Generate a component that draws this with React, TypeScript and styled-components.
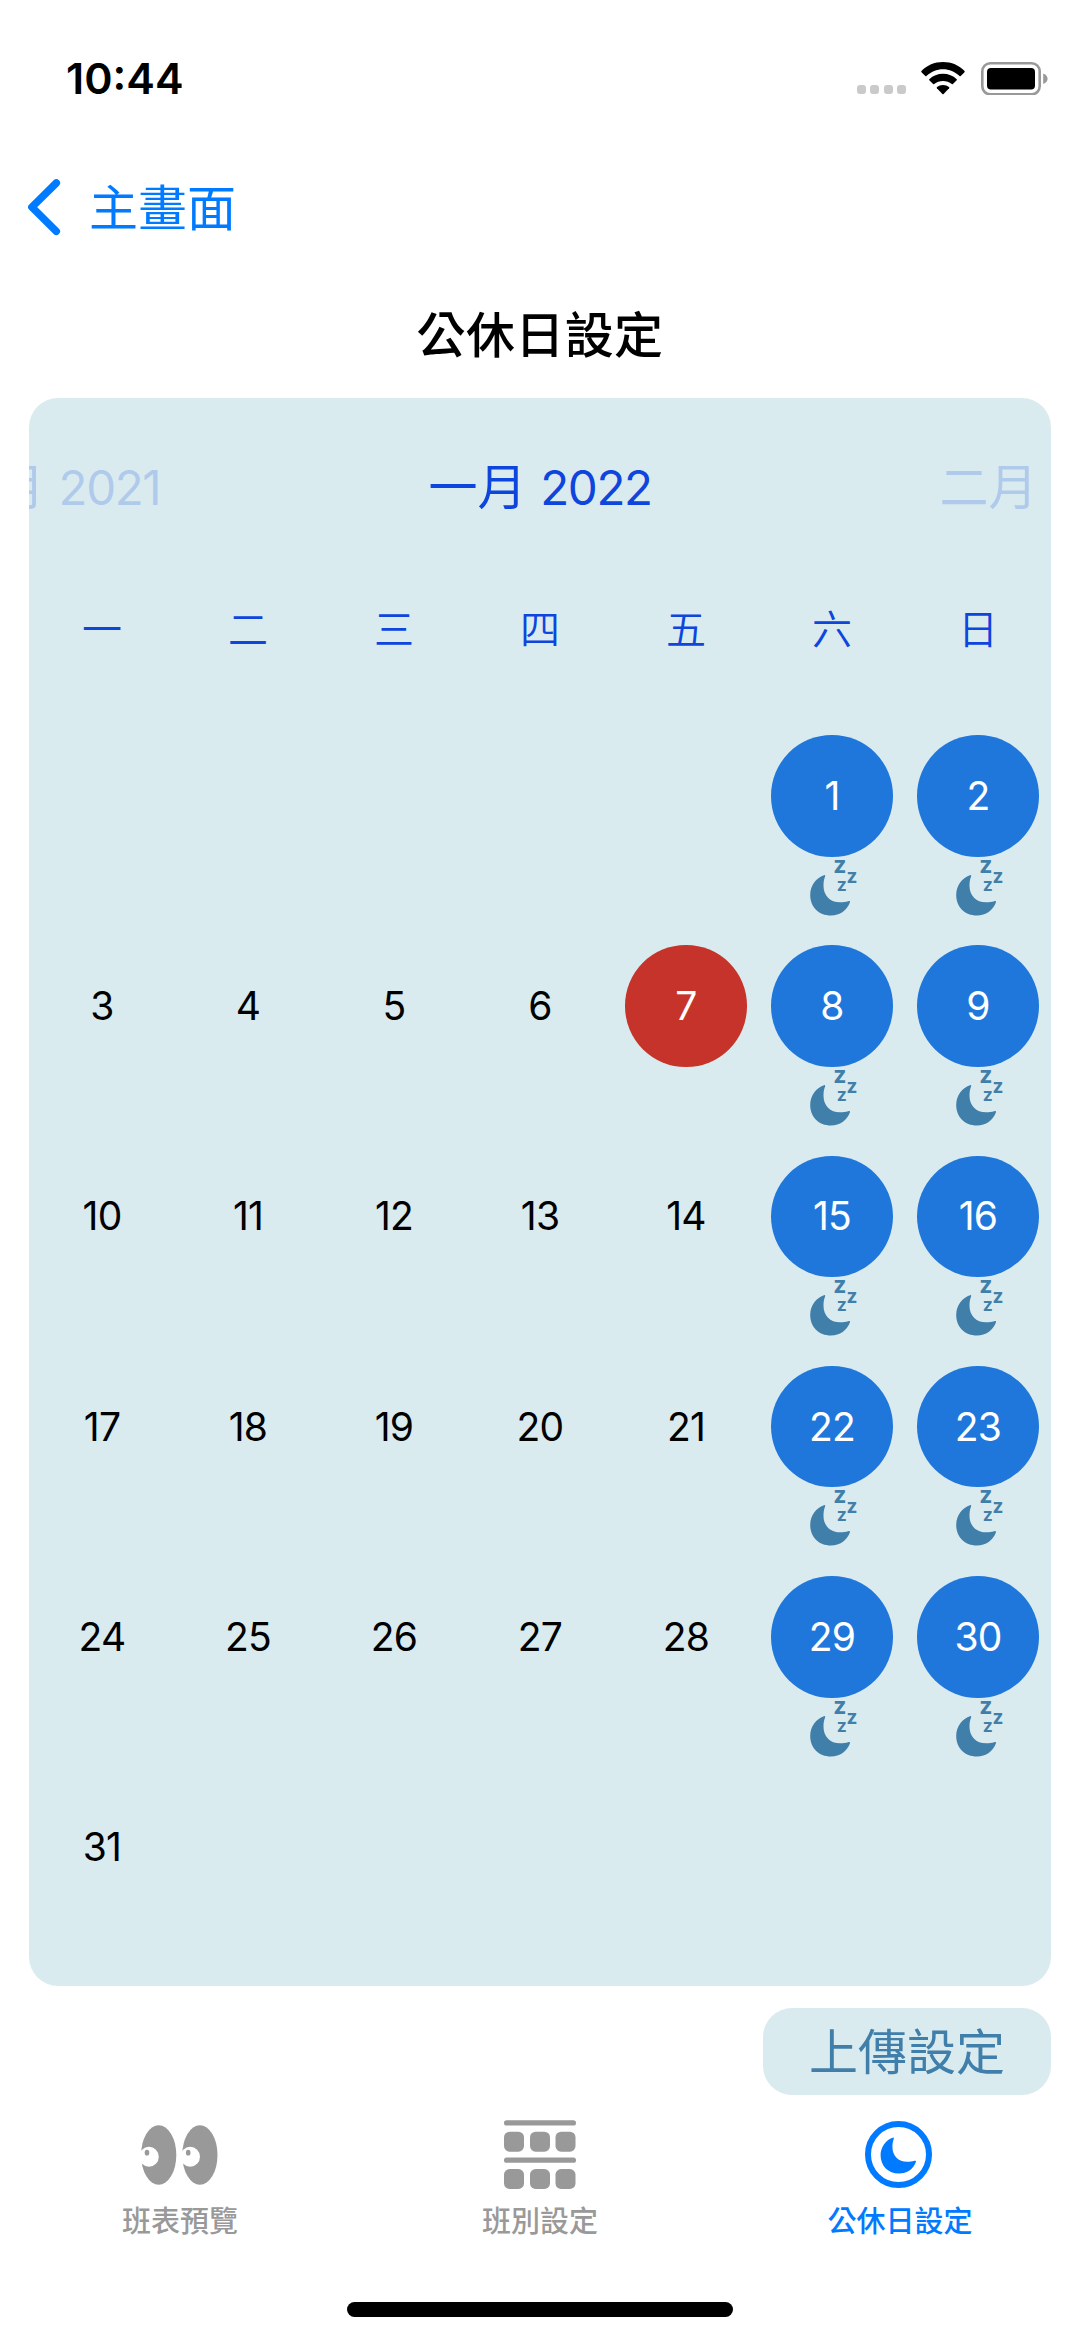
import React from 'react';
import styled, { createGlobalStyle } from 'styled-components';

const BLUE = '#007aff';
const GRAY = '#999999';
const PANEL = '#daebef';
const STEEL = '#417fab';

const GlobalStyle = createGlobalStyle`
  *, *::before, *::after { box-sizing: border-box; }
  body {
    margin: 0;
    background: #fff;
    font-family: Inter, "Noto Sans CJK TC", sans-serif;
    color: #000;
  }
  svg { display: block; }
`;

const Screen = styled.div`
  width: 1080px;
  height: 2340px;
  display: flex;
  flex-direction: column;
  background: #fff;
  overflow: hidden;
`;

const StatusBar = styled.header`
  height: 127px;
  padding: 62px 32px 0 66px;
  display: flex;
  justify-content: space-between;
  align-items: flex-start;
`;

const Clock = styled.div`
  font-size: 43px;
  line-height: 32px;
  font-weight: 600;
`;

const StatusIcons = styled.div`
  display: flex;
  align-items: flex-end;
  height: 33px;
`;

const SignalDots = styled.div`
  display: flex;
  gap: 4.5px;
  margin: 0 15px 1px 0;
`;

const SignalDot = styled.span`
  width: 9px;
  height: 9px;
  border-radius: 3px;
  background: #cacaca;
`;

const NavBar = styled.nav`
  height: 162px;
  padding: 0 28px;
  display: flex;
  align-items: center;
`;

const BackButton = styled.button`
  display: flex;
  align-items: center;
  gap: 28px;
  padding: 0;
  border: 0;
  background: none;
  font: inherit;
  font-size: 49px;
  line-height: 60px;
  color: ${BLUE};
`;

const BackLabel = styled.span`
  padding-top: 2px;
`;

const Title = styled.h1`
  margin: 0;
  height: 108.5px;
  padding-top: 17px;
  text-align: center;
  font-size: 49px;
  line-height: 60px;
  font-weight: 500;
  letter-spacing: 0.4px;
`;

const Calendar = styled.section`
  height: 1588px;
  flex: none;
  margin: 0 29px;
  border-radius: 29px;
  background: ${PANEL};
  overflow: hidden;
  display: flex;
  flex-direction: column;
`;

const MonthHeader = styled.div`
  height: 180px;
  flex: none;
  display: flex;
  justify-content: center;
  align-items: center;
`;

const Month = styled.div<{ $faded?: boolean }>`
  flex: 0 0 511px;
  text-align: center;
  white-space: nowrap;
  font-size: 49px;
  line-height: 60px;
  color: rgb(14, 69, 221);
  opacity: ${(p) => (p.$faded ? 0.2 : 1)};
`;

const Year = styled.span`
  font-size: 47.5px;
  letter-spacing: -1.4px;
`;

const WeekdayRow = styled.div`
  display: grid;
  grid-template-columns: repeat(7, 1fr);
  height: 157.5px;
  flex: none;
  padding-top: 22px;
`;

const Weekday = styled.div`
  text-align: center;
  font-size: 40px;
  line-height: 60px;
  font-weight: 350;
  color: rgb(14, 69, 221);
`;

const DayGrid = styled.div`
  flex: none;
  display: grid;
  grid-template-columns: repeat(7, 1fr);
  grid-auto-rows: 210.3px;
`;

const DayCell = styled.div`
  display: flex;
  flex-direction: column;
  align-items: center;
`;

type DayKind = 'plain' | 'off' | 'today';

const dayFill: Record<DayKind, string> = {
  plain: 'transparent',
  off: 'rgb(31, 119, 219)',
  today: 'rgb(198, 51, 42)',
};

const DayNumber = styled.div<{ $kind: DayKind }>`
  width: 121.5px;
  height: 121.5px;
  flex: none;
  border-radius: 50%;
  display: flex;
  align-items: center;
  justify-content: center;
  font-size: 39px;
  line-height: 48px;
  letter-spacing: -0.8px;
  background: ${(p) => dayFill[p.$kind]};
  color: ${(p) => (p.$kind === 'plain' ? '#000' : '#fff')};
`;

const SleepMark = styled.div`
  margin: 3px 0 0 3px;
`;

const ActionRow = styled.div`
  padding: 22.5px 29px 0;
  display: flex;
  justify-content: flex-end;
`;

const UploadButton = styled.button`
  width: 288px;
  height: 87px;
  padding: 2px 0 0;
  border: 0;
  border-radius: 29px;
  background: ${PANEL};
  color: ${STEEL};
  font: inherit;
  font-size: 49px;
  line-height: 60px;
`;

const TabBar = styled.nav`
  display: grid;
  grid-template-columns: repeat(3, 1fr);
  height: 207px;
  padding-top: 21.5px;
`;

const Tab = styled.a<{ $active?: boolean }>`
  display: flex;
  flex-direction: column;
  align-items: center;
  color: ${(p) => (p.$active ? BLUE : GRAY)};
  font-size: 29px;
  line-height: 40px;
  font-weight: 500;
`;

const TabIcon = styled.div<{ $nudge?: number }>`
  height: 76px;
  margin: 0 ${(p) => p.$nudge ?? 0}px 9.5px 0;
  display: flex;
  align-items: center;
`;

const HomeIndicator = styled.div`
  width: 386px;
  height: 15px;
  margin: 0 auto;
  border-radius: 8px;
  background: #000;
`;

const BatteryBox = styled.div`
  margin-left: 16px;
`;

const WifiIcon = () => (
  <svg width="44" height="33" viewBox="0 0 44 33">
    <path d="M22 0C30.4 0 38.2 3.2 43.6 9.1Q44 9.7 43.5 10.2L39.7 14Q39.1 14.5 38.6 14C34 9.6 28.2 7.2 22 7.2S10 9.6 5.4 14Q4.9 14.5 4.3 14L.5 10.2Q0 9.7 .4 9.1C5.8 3.2 13.6 0 22 0Z" />
    <path d="M22 11.7C27.3 11.7 32 13.6 35.7 17.2Q36.3 17.8 35.7 18.3L31.9 22.1Q31.4 22.6 30.8 22.1C28.3 20 25.3 18.9 22 18.9S15.7 20 13.2 22.1Q12.6 22.6 12.1 22.1L8.3 18.3Q7.7 17.8 8.3 17.2C12 13.6 16.7 11.7 22 11.7Z" />
    <path d="M22 23C24.3 23 26.4 23.7 28 25.1Q28.6 25.7 28.1 26.3L22.6 32Q22 32.6 21.4 32L15.9 26.3Q15.4 25.7 16 25.1C17.6 23.7 19.7 23 22 23Z" />
  </svg>
);

const BatteryIcon = () => (
  <svg width="67" height="33.5" viewBox="0 0 67 33.5">
    <rect x="1.3" y="1.3" width="57.4" height="31" rx="8" fill="none" stroke={GRAY} strokeWidth="2.6" />
    <rect x="6" y="6" width="48" height="21.5" rx="4" />
    <path d="M62.2 11.5Q66.6 13.5 66.6 16.8T62.2 22Z" fill={GRAY} />
  </svg>
);

const BackIcon = () => (
  <svg width="33" height="58" viewBox="0 0 33 58" fill="none" stroke={BLUE} strokeWidth="7.5" strokeLinecap="round" strokeLinejoin="round">
    <path d="M28.3 4L3.9 28.2L28.3 52.3" />
  </svg>
);

const MOON =
  'M14.6 .1C15.5 .3 15.2 1.3 14.8 2.3C13.8 5 13.5 7.7 13.5 10.7C13.5 20.6 20.1 27.3 30 27.3C33 27.3 35.7 27 38.2 26.2C39.5 25.9 40.3 26.3 39.9 27.5C37 35.3 29.9 40.5 21 40.5C8.7 40.5 .2 32 .2 20C.2 11 6 2.7 14.6 .1Z';

const SleepSvg = styled.svg`
  overflow: visible;
  font-family: Inter, sans-serif;
  font-weight: 700;
`;

const MoonSleepIcon = () => (
  <SleepSvg width="48" height="56" viewBox="0 0 48 56" fill={STEEL}>
    <path d={MOON} transform="translate(0 15)" />
    <text x="23.2" y="13.2" fontSize="23">z</text>
    <text x="36.6" y="22.6" fontSize="19">z</text>
    <text x="26.8" y="31" fontSize="17.5">z</text>
  </SleepSvg>
);

const EyesIcon = () => (
  <svg width="77" height="60" viewBox="0 0 77 60">
    {[0, 41.2].map((x) => (
      <g key={x} transform={`translate(${x} 0)`}>
        <ellipse cx="17.7" cy="30" rx="17.6" ry="29.8" fill={GRAY} />
        <ellipse cx="8" cy="31.7" rx="9.8" ry="10" fill="#fff" />
        <ellipse cx="6" cy="27.7" rx="2.3" ry="2.9" fill={GRAY} />
      </g>
    ))}
  </svg>
);

const ShiftGridIcon = () => (
  <svg width="72" height="69" viewBox="0 0 72 69" fill={GRAY}>
    {[0, 37.3].map((y) => (
      <g key={y} transform={`translate(0 ${y})`}>
        <rect width="72" height="5.3" y="0.2" rx="2.6" />
        {[0, 26, 51.5].map((x) => (
          <rect key={x} x={x} y="11.7" width="20" height="20" rx="5.6" />
        ))}
      </g>
    ))}
  </svg>
);

const MoonCircleIcon = () => (
  <svg width="67" height="67" viewBox="0 0 67 67" fill={BLUE}>
    <circle cx="33.5" cy="33.5" r="30.5" fill="none" stroke={BLUE} strokeWidth="6" />
    <path d={MOON} transform="translate(15.4 16.5) scale(0.89)" />
  </svg>
);

const weekdays = ['一', '二', '三', '四', '五', '六', '日'];
const cells: (number | null)[] = [
  ...Array<null>(5).fill(null),
  ...Array.from({ length: 31 }, (_, i) => i + 1),
];
const TODAY = 7;

export default function App() {
  return (
    <>
      <GlobalStyle />
      <Screen>
        <StatusBar>
          <Clock>10:44</Clock>
          <StatusIcons>
            <SignalDots>
              {[0, 1, 2, 3].map((i) => <SignalDot key={i} />)}
            </SignalDots>
            <WifiIcon />
            <BatteryBox><BatteryIcon /></BatteryBox>
          </StatusIcons>
        </StatusBar>
        <NavBar>
          <BackButton>
            <BackIcon />
            <BackLabel>主畫面</BackLabel>
          </BackButton>
        </NavBar>
        <Title>公休日設定</Title>
        <Calendar>
          <MonthHeader>
            <Month $faded>十二月 <Year>2021</Year></Month>
            <Month>一月 <Year>2022</Year></Month>
            <Month $faded>二月 <Year>2022</Year></Month>
          </MonthHeader>
          <WeekdayRow>
            {weekdays.map((d) => <Weekday key={d}>{d}</Weekday>)}
          </WeekdayRow>
          <DayGrid>
            {cells.map((day, i) => {
              if (day === null) return <DayCell key={i} />;
              const off = i % 7 >= 5;
              const kind: DayKind = off ? 'off' : day === TODAY ? 'today' : 'plain';
              return (
                <DayCell key={i}>
                  <DayNumber $kind={kind}>{day}</DayNumber>
                  {off && <SleepMark><MoonSleepIcon /></SleepMark>}
                </DayCell>
              );
            })}
          </DayGrid>
        </Calendar>
        <ActionRow>
          <UploadButton>上傳設定</UploadButton>
        </ActionRow>
        <TabBar>
          <Tab>
            <TabIcon $nudge={2}><EyesIcon /></TabIcon>
            班表預覽
          </Tab>
          <Tab>
            <TabIcon><ShiftGridIcon /></TabIcon>
            班別設定
          </Tab>
          <Tab $active>
            <TabIcon $nudge={3}><MoonCircleIcon /></TabIcon>
            公休日設定
          </Tab>
        </TabBar>
        <HomeIndicator />
      </Screen>
    </>
  );
}
